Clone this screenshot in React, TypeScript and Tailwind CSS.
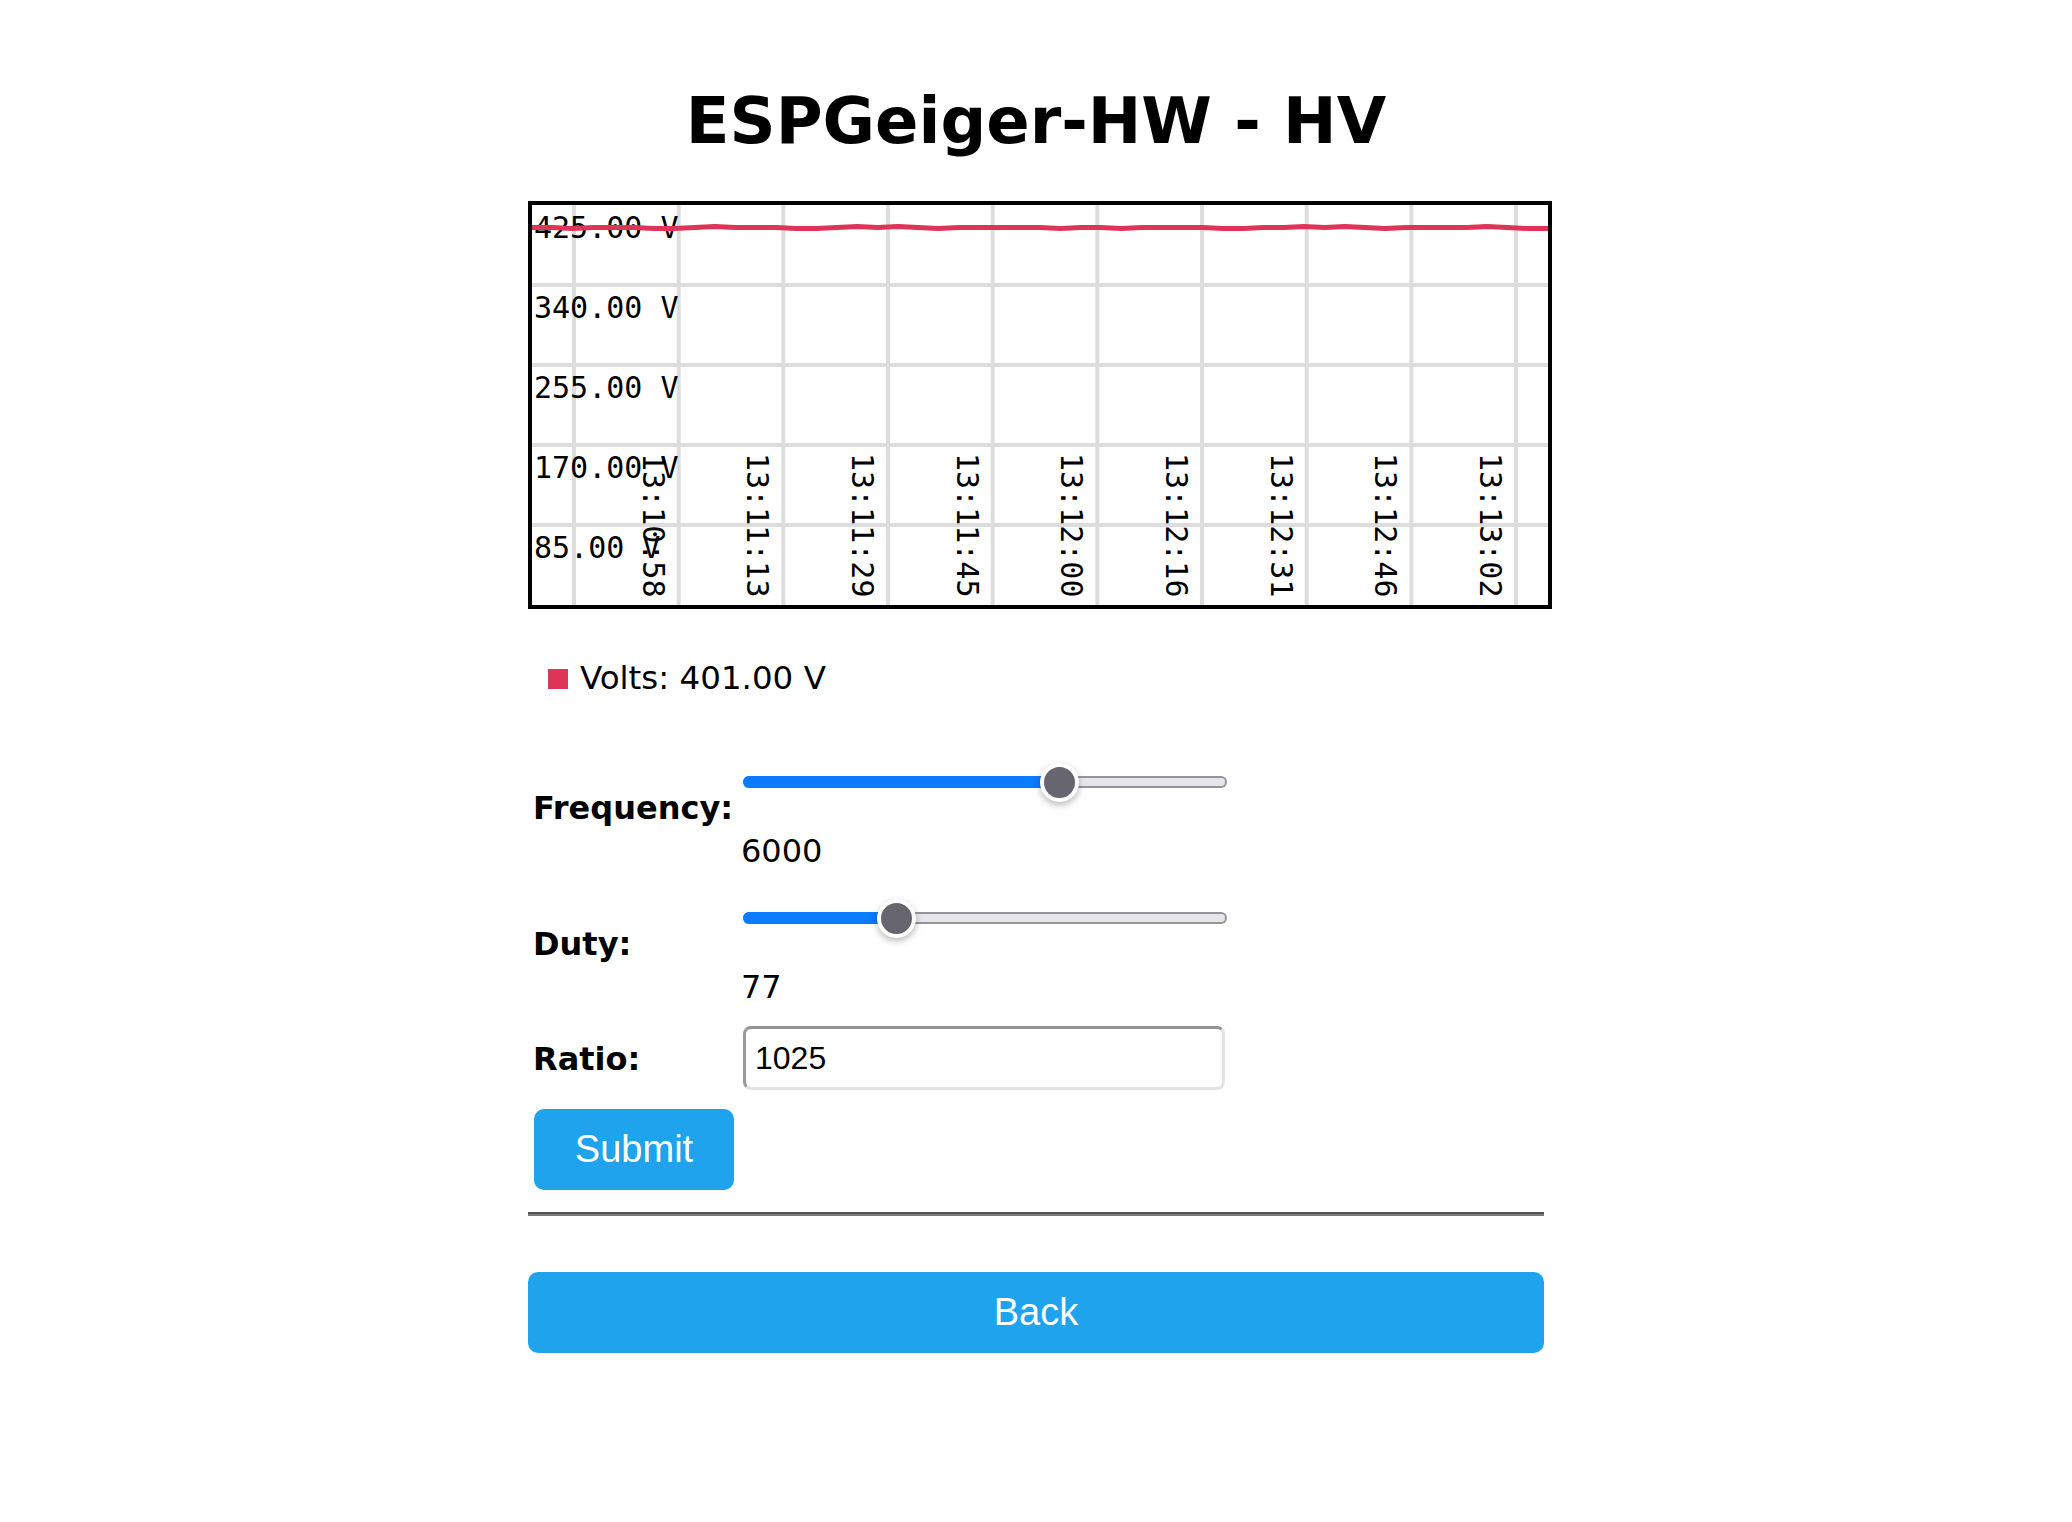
import React from "react";

const yLabels = ["425.00 V", "340.00 V", "255.00 V", "170.00 V", "85.00 V"];
const times = [
  "13:10:58",
  "13:11:13",
  "13:11:29",
  "13:11:45",
  "13:12:00",
  "13:12:16",
  "13:12:31",
  "13:12:46",
  "13:13:02",
];
const volts = [
  401, 401, 400, 401, 401, 401, 400, 400, 401, 402, 401, 401, 401, 400, 400, 401, 402,
  401, 402, 401, 400, 401, 401, 401, 401, 401, 400, 401, 401, 400, 401, 401, 401, 401,
  400, 400, 401, 401, 402, 401, 402, 401, 400, 401, 401, 401, 401, 402, 401, 400, 400,
];

function Chart() {
  const w = 1016;
  const h = 400;
  const gridX = Array.from({ length: 10 }, (_, i) => 42 + i * 104.67);
  const pts = volts
    .map((v, i) => `${((i * w) / (volts.length - 1)).toFixed(1)},${(h - (v / 425) * h).toFixed(1)}`)
    .join(" ");

  return (
    <div className="w-[1024px] border-4 border-black bg-white">
      <svg
        width={w}
        height={h}
        className="block font-['DejaVu_Sans_Mono',monospace] text-[30px]"
      >
        {[80, 160, 240, 320].map((y) => (
          <line key={y} x1={0} x2={w} y1={y} y2={y} stroke="#dddddd" strokeWidth={4} />
        ))}
        {gridX.map((x) => (
          <line key={x} x1={x} x2={x} y1={0} y2={h} stroke="#dddddd" strokeWidth={4} />
        ))}
        {yLabels.map((l, i) => (
          <text key={l} x={2} y={33 + i * 80} fill="#000">
            {l}
          </text>
        ))}
        {times.map((t, i) => (
          <text
            key={t}
            transform={`translate(${(gridX[i + 1] - 36).toFixed(1)} 248) rotate(90)`}
            fill="#000"
          >
            {t}
          </text>
        ))}
        <polyline
          points={pts}
          fill="none"
          stroke="#de3457"
          strokeWidth={5}
          strokeLinejoin="round"
        />
      </svg>
    </div>
  );
}

function Slider({ pct }: { pct: number }) {
  const c = 19.5 + pct * 445;
  return (
    <div className="relative ml-[2px] flex h-[40px] w-[484px] items-center">
      <div className="relative h-[12px] w-full overflow-hidden rounded-full bg-[#95939c]">
        <div className="absolute inset-[2px] rounded-full bg-[#e7e6eb]" />
        <div className="absolute inset-y-0 left-0 bg-[#0a7aff]" style={{ width: c }} />
      </div>
      <div
        className="absolute top-[0.5px] h-[39px] w-[39px] rounded-full border-4 border-white bg-[#67666f] shadow-[0_3px_7px_rgba(0,0,0,0.28)]"
        style={{ left: c - 19.5 }}
      />
    </div>
  );
}

export default function App() {
  return (
    <div className="min-h-screen bg-white font-['DejaVu_Sans',sans-serif] text-black">
      <div className="mx-auto w-[1016px]">
        <h1 className="pt-[89px] text-center text-[64px] font-bold leading-[64px]">
          ESPGeiger-HW - HV
        </h1>

        <div className="mt-[48px]">
          <Chart />
        </div>

        {/* Legend */}
        <div className="mt-[51px] flex h-[37px] items-center gap-[12px] pl-[20px] text-[32.5px] leading-[37px]">
          <span className="h-[20px] w-[20px] bg-[#de3457]" />
          <span>Volts: 401.00 V</span>
        </div>

        {/* Frequency */}
        <div className="mt-[65px] grid grid-cols-[213px_1fr] text-[32px] leading-[37px]">
          <div className="pl-[5px] pt-[28px] font-bold">Frequency:</div>
          <div>
            <Slider pct={6000 / 9000} />
            <div className="mt-[31px]">6000</div>
          </div>
        </div>

        {/* Duty */}
        <div className="mt-[28px] grid grid-cols-[213px_1fr] text-[32px] leading-[37px]">
          <div className="pl-[5px] pt-[28px] font-bold">Duty:</div>
          <div>
            <Slider pct={77 / 255} />
            <div className="mt-[31px]">77</div>
          </div>
        </div>

        {/* Ratio */}
        <div className="mt-[20px] grid grid-cols-[213px_1fr] text-[32px] leading-[37px]">
          <div className="pl-[5px] pt-[15px] font-bold">Ratio:</div>
          <div className="ml-[2px] flex h-[64px] w-[482px] items-center rounded-[8px] border-[3px] border-b-[#e3e3e3] border-l-[#9a9a9a] border-r-[#e3e3e3] border-t-[#939393] pl-[9px] font-['Liberation_Sans',Arial,sans-serif] text-[32px]">
            1025
          </div>
        </div>

        <button className="ml-[6px] mt-[19px] flex h-[81px] w-[200px] items-center justify-center rounded-[10px] bg-[#1fa3ec] font-['Liberation_Sans',Arial,sans-serif] text-[38px] text-white">
          Submit
        </button>

        <div className="mt-[22px] h-[4px] border-b-2 border-t-2 border-b-[#7b7b7b] border-t-[#545454]" />

        <button className="mt-[56px] flex h-[81px] w-full items-center justify-center rounded-[10px] bg-[#1fa3ec] font-['Liberation_Sans',Arial,sans-serif] text-[38px] text-white">
          Back
        </button>
      </div>
    </div>
  );
}
